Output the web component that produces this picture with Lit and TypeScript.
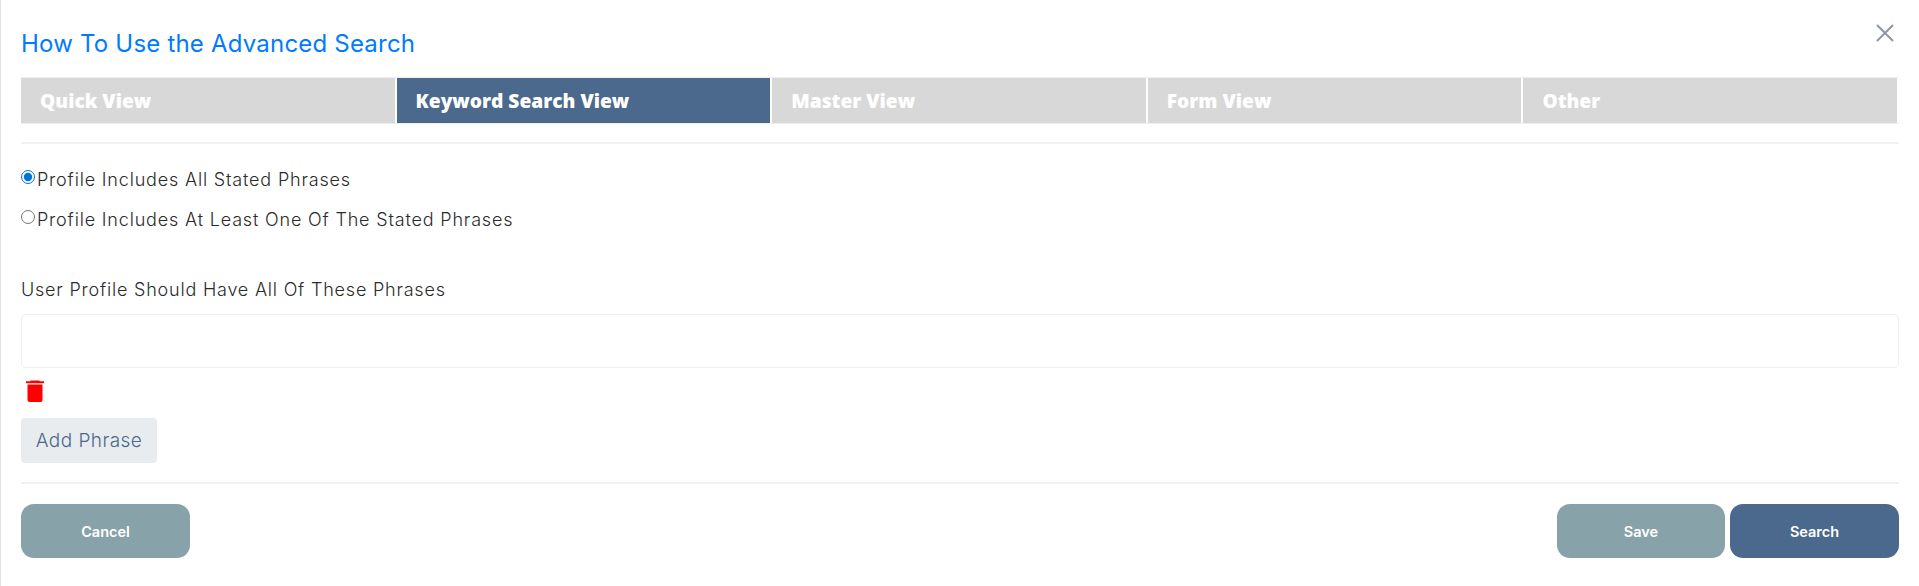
import { LitElement, html, css } from "lit";
import { customElement, state } from "lit/decorators.js";

const TABS = ["Quick View", "Keyword Search View", "Master View", "Form View", "Other"];

@customElement("app-root")
export class AppRoot extends LitElement {
  static override styles = css`
    :host {
      display: block;
      font-family: "Inter", "Lato", sans-serif;
      color: #2b2b2b;
    }

    .modal {
      box-sizing: border-box;
      height: 586px;
      padding: 0 20px 0 20px;
      border-left: 1px solid #dee2e6;
      background: #fff;
    }

    .head {
      display: flex;
      justify-content: space-between;
      height: 77px;
    }

    .title {
      margin: 29px 0 0;
      font-size: 24px;
      line-height: 29px;
      font-weight: 400;
      letter-spacing: 0.2px;
      color: #007bff;
    }

    .close {
      margin: 24px 5px 0 0;
      padding: 0;
      width: 18px;
      height: 18px;
      border: 0;
      background: none;
      line-height: 0;
    }

    .tabs {
      display: flex;
      gap: 2px;
      height: 47px;
      padding-right: 2px;
      box-sizing: border-box;
      border-top: 1px solid #eee;
      border-bottom: 1px solid #eee;
    }

    .tab {
      flex: 1;
      display: flex;
      align-items: center;
      padding-left: 19px;
      background: #d8d8d8;
      color: #fff;
      font-family: "Open Sans", sans-serif;
      font-size: 19.2px;
      font-weight: 800;
    }

    .tab.active {
      background: #4b698c;
    }

    .rule {
      height: 2px;
      background: #f1f1f1;
    }

    .rule.top {
      margin-top: 18px;
    }

    .options {
      display: flex;
      flex-direction: column;
      gap: 14px;
      padding-top: 22px;
    }

    .option {
      display: flex;
      align-items: center;
      height: 26px;
      font-size: 18px;
      font-weight: 300;
      letter-spacing: 0.82px;
      cursor: pointer;
    }

    .option input {
      flex: none;
      width: 14px;
      height: 14px;
      margin: 0 2px 5px 0;
      accent-color: #0075d6;
    }

    .field-label {
      margin-top: 45px;
      font-size: 18px;
      line-height: 26px;
      font-weight: 300;
      letter-spacing: 0.79px;
    }

    .field {
      display: block;
      box-sizing: border-box;
      width: 100%;
      height: 54px;
      margin-top: 11px;
      border: 1px solid #eee;
      border-radius: 5px;
      background: #fff;
    }

    .trash {
      display: block;
      margin: 11px 0 0 5px;
    }

    .add {
      display: block;
      width: 136px;
      height: 45px;
      margin-top: 16px;
      padding: 0;
      border: 0;
      border-radius: 4px;
      background: #e9ecef;
      color: #4b698c;
      font: 300 19px "Inter", sans-serif;
      letter-spacing: 0.45px;
    }

    .rule.bottom {
      margin-top: 19px;
    }

    .actions {
      display: flex;
      gap: 5px;
      margin-top: 20px;
    }

    .actions button {
      width: 169px;
      height: 54px;
      padding: 0;
      border: 0;
      border-radius: 13px;
      background: #87a2a8;
      color: #fff;
      font: 600 14.5px "Inter", sans-serif;
    }

    .actions .cancel {
      margin-right: auto;
    }

    .actions .save {
      width: 168px;
    }

    .actions .search {
      background: #4b698c;
    }
  `;

  @state() private mode = "all";

  override render() {
    return html`
      <div class="modal">
        <div class="head">
          <h5 class="title">How To Use the Advanced Search</h5>
          <button class="close" aria-label="Close">
            <svg width="18" height="18" viewBox="0 0 18 18" fill="none" stroke="#8f95a3" stroke-width="2">
              <path d="M1 1l16 16M17 1L1 17" />
            </svg>
          </button>
        </div>
        <div class="tabs">
          ${TABS.map((t, i) => html`<div class="tab ${i === 1 ? "active" : ""}">${t}</div>`)}
        </div>
        <div class="rule top"></div>
        <div class="options">
          <label class="option">
            <input type="radio" name="mode" .checked=${this.mode === "all"} @change=${() => (this.mode = "all")} />
            Profile Includes All Stated Phrases
          </label>
          <label class="option">
            <input type="radio" name="mode" .checked=${this.mode === "any"} @change=${() => (this.mode = "any")} />
            Profile Includes At Least One Of The Stated Phrases
          </label>
        </div>
        <div class="field-label">User Profile Should Have All Of These Phrases</div>
        <input class="field" type="text" />
        <svg class="trash" width="18" height="23" viewBox="0 0 18 23" fill="#ff0000">
          <path d="M5 1.5h8l1 .8h4V4.200H0V2.300h4z" />
          <path d="M1.500 5.500h15V21a2 2 0 0 1-2 2h-11a2 2 0 0 1-2-2z" />
        </svg>
        <button class="add">Add Phrase</button>
        <div class="rule bottom"></div>
        <div class="actions">
          <button class="cancel">Cancel</button>
          <button class="save">Save</button>
          <button class="search">Search</button>
        </div>
      </div>
    `;
  }
}
